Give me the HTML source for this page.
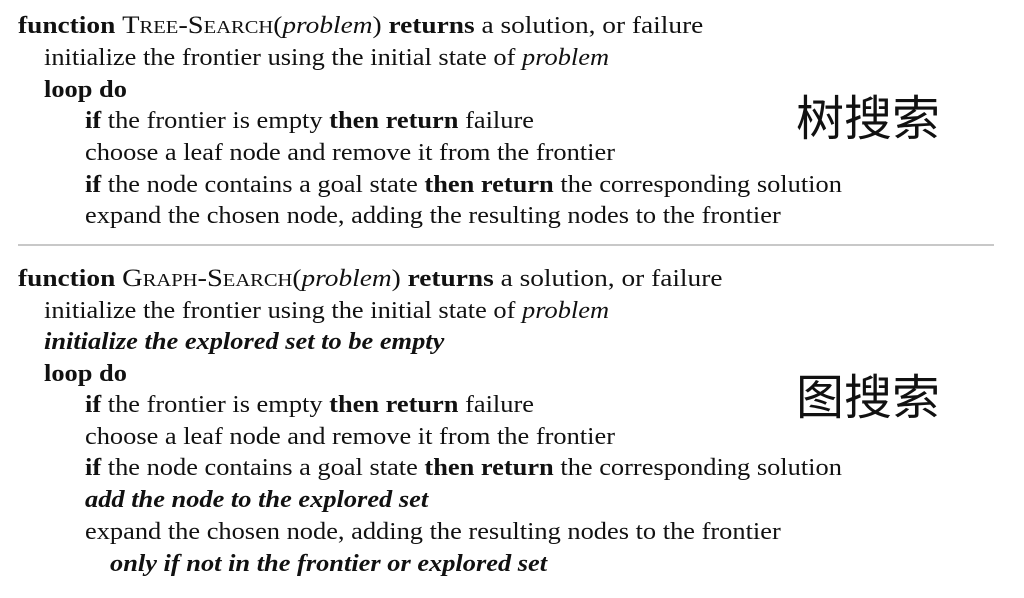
<!DOCTYPE html>
<html><head><meta charset="utf-8"><style>
body{margin:0;width:1024px;height:598px;background:#fff;position:relative;overflow:hidden;font-family:"Liberation Serif",serif;color:#111}
.l{position:absolute;font-size:24px;line-height:32px;white-space:nowrap;transform-origin:0 50%;transform:scaleX(1.1)}
.l.f{transform:scaleX(1.14)}
.sc{font-variant:small-caps;font-size:25px}
.zh{position:absolute;font-family:"Noto Sans CJK SC",sans-serif;font-size:48px;line-height:48px;left:796px;color:#111}
hr{position:absolute;left:18px;top:244px;width:976px;height:2px;border:0;background:#c8c8c8;margin:0}
</style></head><body>
<div class="l f" style="left:18px;top:10px"><b>function</b> <span class="sc">Tree-Search</span>(<i>problem</i>) <b>returns</b> a solution, or failure</div>
<div class="l" style="left:44px;top:42px">initialize the frontier using the initial state of <i>problem</i></div>
<div class="l" style="left:44px;top:74px"><b>loop do</b></div>
<div class="l" style="left:85px;top:105px"><b>if</b> the frontier is empty <b>then return</b> failure</div>
<div class="l" style="left:85px;top:137px">choose a leaf node and remove it from the frontier</div>
<div class="l" style="left:85px;top:169px"><b>if</b> the node contains a goal state <b>then return</b> the corresponding solution</div>
<div class="l" style="left:85px;top:200px">expand the chosen node, adding the resulting nodes to the frontier</div>
<div class="zh" style="top:90px">树搜索</div>
<hr>
<div class="l f" style="left:18px;top:263px"><b>function</b> <span class="sc">Graph-Search</span>(<i>problem</i>) <b>returns</b> a solution, or failure</div>
<div class="l" style="left:44px;top:295px">initialize the frontier using the initial state of <i>problem</i></div>
<div class="l" style="left:44px;top:326px"><b><i>initialize the explored set to be empty</i></b></div>
<div class="l" style="left:44px;top:358px"><b>loop do</b></div>
<div class="l" style="left:85px;top:389px"><b>if</b> the frontier is empty <b>then return</b> failure</div>
<div class="l" style="left:85px;top:421px">choose a leaf node and remove it from the frontier</div>
<div class="l" style="left:85px;top:452px"><b>if</b> the node contains a goal state <b>then return</b> the corresponding solution</div>
<div class="l" style="left:85px;top:484px"><b><i>add the node to the explored set</i></b></div>
<div class="l" style="left:85px;top:516px">expand the chosen node, adding the resulting nodes to the frontier</div>
<div class="l" style="left:110px;top:548px"><b><i>only if not in the frontier or explored set</i></b></div>
<div class="zh" style="top:369px">图搜索</div>
</body></html>
